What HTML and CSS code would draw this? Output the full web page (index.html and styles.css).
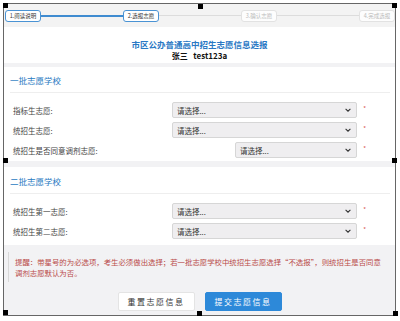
FILE: index.html
```html
<!DOCTYPE html>
<html>
  <head>
    <title>志愿信息选报</title>
    <link rel="stylesheet" href="styles.css">
  </head>
  <body>
    <div class="canvas">
      <div class="frame">
        <div class="steps">
          <div class="step done">1.阅读说明</div>
          <div class="step-line done"></div>
          <div class="step done">2.选报志愿</div>
          <div class="step-line"></div>
          <div class="step">3.确认志愿</div>
          <div class="step-line"></div>
          <div class="step">4.完成选报</div>
        </div>

        <div class="panel head">
          <div class="title">市区公办普通高中招生志愿信息选报</div>
          <div class="name">张三&nbsp;&nbsp;&nbsp;test123a</div>
        </div>

        <div class="panel section first">
          <div class="section-title">一批志愿学校</div>
          <div class="rows">
            <div class="row">
              <span class="label">指标生志愿:</span>
              <div class="select"><span>请选择...</span><svg viewBox="0 0 10 6" width="6" height="4"><path d="M1 1l4 4 4-4" fill="none" stroke="#333" stroke-width="1.8"/></svg></div>
              <span class="star">*</span>
            </div>
            <div class="row">
              <span class="label">统招生志愿:</span>
              <div class="select"><span>请选择...</span><svg viewBox="0 0 10 6" width="6" height="4"><path d="M1 1l4 4 4-4" fill="none" stroke="#333" stroke-width="1.8"/></svg></div>
              <span class="star">*</span>
            </div>
            <div class="row">
              <span class="label">统招生是否同意调剂志愿:</span>
              <div class="select short"><span>请选择...</span><svg viewBox="0 0 10 6" width="6" height="4"><path d="M1 1l4 4 4-4" fill="none" stroke="#333" stroke-width="1.8"/></svg></div>
              <span class="star">*</span>
            </div>
          </div>
        </div>

        <div class="panel section second">
          <div class="section-title">二批志愿学校</div>
          <div class="rows">
            <div class="row">
              <span class="label">统招生第一志愿:</span>
              <div class="select"><span>请选择...</span><svg viewBox="0 0 10 6" width="6" height="4"><path d="M1 1l4 4 4-4" fill="none" stroke="#333" stroke-width="1.8"/></svg></div>
              <span class="star">*</span>
            </div>
            <div class="row">
              <span class="label">统招生第二志愿:</span>
              <div class="select"><span>请选择...</span><svg viewBox="0 0 10 6" width="6" height="4"><path d="M1 1l4 4 4-4" fill="none" stroke="#333" stroke-width="1.8"/></svg></div>
              <span class="star">*</span>
            </div>
          </div>
        </div>

        <div class="notice">提醒：带星号的为必选项，考生必须做出选择；若一批志愿学校中统招生志愿选择“不选报”，则统招生是否同意调剂志愿默认为否。</div>

        <div class="actions">
          <div class="btn">重置志愿信息</div>
          <div class="btn primary">提交志愿信息</div>
        </div>
      </div>

      <span class="handle tl"></span>
      <span class="handle tc"></span>
      <span class="handle tr"></span>
      <span class="handle ml"></span>
      <span class="handle mr"></span>
      <span class="handle bl"></span>
      <span class="handle bc"></span>
      <span class="handle br"></span>
    </div>
  </body>
</html>
```

FILE: styles.css
```css
body {
  margin: 0;
  background-color: #ffffff;
  font-family: "Noto Sans CJK SC", "Noto Sans", sans-serif;
}
.canvas {
  position: relative;
  width: 400px;
  height: 321px;
  overflow: hidden;
}
.frame {
  margin: 3px 0 0 3px;
  width: 391px;
  height: 311px;
  border: 1px solid #666;
  background-color: #f2f2f4;
  overflow: hidden;
}

/* step bar */
.steps {
  display: flex;
  align-items: center;
  height: 23px;
  padding: 0 0 0 1px;
  background-color: #f3f3f3;
}
.step {
  width: 34px;
  height: 10px;
  line-height: 10px;
  border: 1.5px solid #e2e2e2;
  border-radius: 3px;
  background-color: #fdfdfd;
  font-size: 5.5px;
  color: #bbbbbb;
  text-align: center;
  white-space: nowrap;
}
.step.done {
  border-color: #4a93d4;
  background-color: #ffffff;
  color: #333;
}
.step-line {
  flex: 1;
  height: 1px;
  background-color: #dcdcdc;
}
.step-line.done {
  height: 2px;
  background-color: #3f8bd0;
}

/* panels */
.panel {
  background-color: #ffffff;
}
.head {
  padding: 11px 0 2px;
  text-align: center;
}
.title {
  font-size: 8.5px;
  line-height: 12px;
  font-weight: bold;
  color: #2a78c4;
}
.name {
  font-size: 8px;
  line-height: 11px;
  font-weight: bold;
  color: #111;
}
.section.first {
  margin-top: 4px;
  padding-bottom: 3px;
}
.section.second {
  margin-top: 6px;
  padding-bottom: 6px;
}
.section-title {
  margin: 0 5px 0 6px;
  height: 25px;
  line-height: 26px;
  font-size: 8.5px;
  color: #2a7bc2;
  border-bottom: 1px solid #eeeeee;
}
.second .section-title {
  height: 26px;
  line-height: 28px;
}
.rows {
  display: flex;
  flex-direction: column;
  gap: 4px;
  padding-top: 9px;
}
.row {
  display: flex;
  align-items: center;
  padding: 0 29px 0 9px;
}
.label {
  flex: 1;
  font-size: 7.5px;
  color: #444;
}
.select {
  display: flex;
  align-items: center;
  justify-content: space-between;
  box-sizing: border-box;
  width: 185px;
  height: 16px;
  padding: 0 5px 0 4px;
  background-color: #efeef0;
  border: 1px solid #d6d6d6;
  border-radius: 2px;
  font-size: 7.5px;
  color: #333;
}
.select.short {
  width: 122px;
}
.star {
  align-self: flex-start;
  width: 9px;
  margin-top: 2px;
  text-align: right;
  font-size: 6px;
  color: #d9534f;
}

/* notice + buttons */
.notice {
  margin: 7px 10px 0 4px;
  padding: 4px 0 4px 6px;
  border-left: 1px solid #d8d8d8;
  font-size: 7.4px;
  line-height: 11px;
  color: #b94a48;
}
.actions {
  display: flex;
  justify-content: center;
  gap: 10px;
  margin-top: 10px;
}
.btn {
  box-sizing: border-box;
  width: 77px;
  height: 19px;
  line-height: 17px;
  border: 1px solid #e4e4e4;
  border-radius: 2px;
  background-color: #ffffff;
  font-size: 8px;
  letter-spacing: 1.5px;
  text-align: center;
  color: #333;
}
.btn.primary {
  border-color: #2d89d9;
  background-color: #2d89d9;
  color: #ffffff;
}

/* selection handles over the picture */
.handle {
  position: absolute;
  width: 5px;
  height: 5px;
  background-color: #000;
}
.tl { left: 3px; top: 3px; }
.tc { left: 198px; top: 4px; }
.tr { left: 392px; top: 3px; }
.ml { left: 3px; top: 158px; }
.mr { left: 392px; top: 158px; }
.bl { left: 3px; top: 310px; }
.bc { left: 197px; top: 311px; }
.br { left: 393px; top: 311px; }
```
